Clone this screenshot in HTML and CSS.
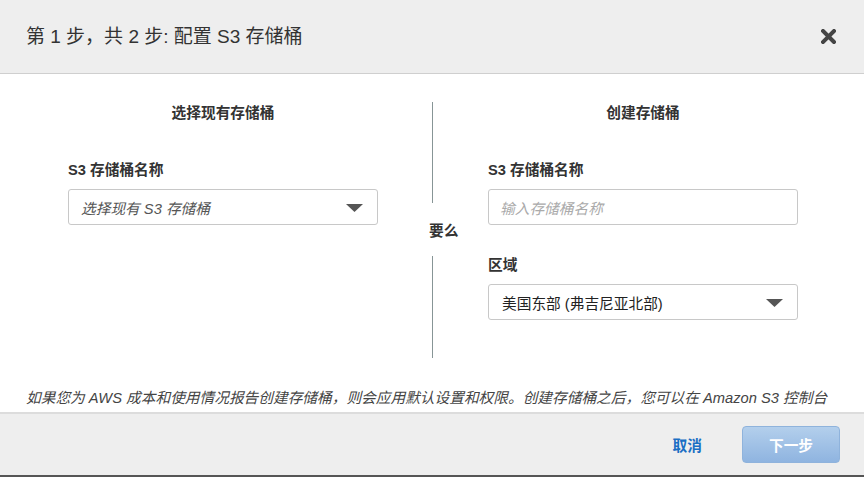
FILE: index.html
```html
<!DOCTYPE html>
<html lang="zh-CN">
<head>
<meta charset="utf-8">
<title>配置 S3 存储桶</title>
<link rel="stylesheet" href="styles.css">
</head>
<body>
<div class="modal">
  <header class="modal-header">
    <h1 class="title">第 1 步，共 2 步: 配置 S3 存储桶</h1>
    <button class="close" aria-label="关闭">
      <svg width="15" height="15" viewBox="0 0 15 15"><path d="M2 2 L13 13 M13 2 L2 13" stroke="#444" stroke-width="4" stroke-linecap="square" fill="none"/></svg>
    </button>
  </header>
  <div class="modal-body">
    <div class="columns">
      <section class="col">
        <h2 class="col-title">选择现有存储桶</h2>
        <label class="field-label">S3 存储桶名称</label>
        <div class="control select">
          <span class="ph-dark">选择现有 S3 存储桶</span>
          <svg class="caret" width="17" height="8" viewBox="0 0 17 8"><polygon points="0,0 17,0 8.5,8" fill="#555"/></svg>
        </div>
      </section>
      <div class="divider">
        <span class="line line-top"></span>
        <span class="or">要么</span>
        <span class="line line-bottom"></span>
      </div>
      <section class="col">
        <h2 class="col-title">创建存储桶</h2>
        <label class="field-label">S3 存储桶名称</label>
        <div class="control input"><span class="ph-light">输入存储桶名称</span></div>
        <label class="field-label second">区域</label>
        <div class="control select">
          <span class="value">美国东部 (弗吉尼亚北部)</span>
          <svg class="caret" width="17" height="8" viewBox="0 0 17 8"><polygon points="0,0 17,0 8.5,8" fill="#555"/></svg>
        </div>
      </section>
    </div>
    <p class="note">如果您为 AWS 成本和使用情况报告创建存储桶，则会应用默认设置和权限。创建存储桶之后，您可以在 Amazon S3 控制台</p>
  </div>
  <footer class="modal-footer">
    <a class="cancel" href="#">取消</a>
    <button class="primary">下一步</button>
  </footer>
</div>
</body>
</html>
```
FILE: styles.css
```css
html, body {
  margin: 0;
  padding: 0;
  height: 477px;
  overflow: hidden;
  background: #fff;
}
body {
  font-family: "Liberation Sans", "Noto Sans CJK SC", sans-serif;
  color: #333;
}
.modal {
  display: flex;
  flex-direction: column;
  height: 477px;
}
.modal-header {
  height: 73px;
  flex: none;
  background: #eeeeee;
  border-bottom: 1px solid #cfcfcf;
  display: flex;
  align-items: center;
  justify-content: space-between;
  padding: 0 28px 0 26px;
}
.title {
  margin: 0;
  font-size: 19px;
  font-weight: normal;
  color: #333;
  line-height: 26px;
}
.close {
  border: 0;
  background: none;
  padding: 0;
  width: 15px;
  height: 15px;
  display: flex;
}
.modal-body {
  height: 338px;
  flex: none;
  overflow: hidden;
  padding: 0 26px;
}
.columns {
  display: grid;
  grid-template-columns: 310px 110px 310px;
  padding-left: 42px;
  margin-top: 28px;
}
.col {
  display: flex;
  flex-direction: column;
}
.col-title {
  margin: 0;
  text-align: center;
  font-size: 14.7px;
  font-weight: bold;
  line-height: 22px;
  color: #333;
}
.field-label {
  display: block;
  margin-top: 36px;
  font-size: 14.7px;
  font-weight: bold;
  line-height: 20px;
  color: #333;
}
.field-label.second {
  margin-top: 30px;
}
.control {
  margin-top: 9px;
  height: 36px;
  box-sizing: border-box;
  border: 1px solid #c8c8c8;
  border-radius: 3px;
  background: #fff;
  display: flex;
  align-items: center;
  justify-content: space-between;
  padding: 0 14px 0 13px;
  font-size: 14.7px;
}
.ph-dark {
  font-style: italic;
  color: #555;
  margin-left: -1px;
}
.ph-light {
  font-style: italic;
  color: #aaa;
  margin-left: -2px;
}
.value {
  color: #222;
}
.caret {
  flex: none;
  margin-top: 1px;
}
.divider {
  display: flex;
  flex-direction: column;
  align-items: flex-start;
  padding-left: 51px;
}
.line {
  display: block;
  width: 1px;
  margin-left: 3px;
  background: #879596;
}
.line-top {
  height: 101px;
}
.line-bottom {
  height: 102px;
}
.or {
  height: 53px;
  display: flex;
  align-items: center;
  font-size: 14.7px;
  font-weight: bold;
  color: #333;
}
.note {
  margin: 29px 0 0 0;
  font-size: 14.7px;
  line-height: 22px;
  font-style: italic;
  color: #444;
  white-space: nowrap;
}
.modal-footer {
  flex: none;
  height: 61px;
  background: #eeeeee;
  border-top: 2px solid #dcdcdc;
  border-bottom: 2px solid #555;
  display: flex;
  align-items: center;
  justify-content: flex-end;
  gap: 40px;
  padding-right: 24px;
}
.cancel {
  color: #1a6fc4;
  font-weight: bold;
  font-size: 14.7px;
  text-decoration: none;
}
.primary {
  width: 98px;
  height: 37px;
  border: 1px solid #8fb3dc;
  border-radius: 4px;
  background: linear-gradient(#b3cfec, #8fb4e0);
  color: #fff;
  font-family: inherit;
  font-weight: bold;
  font-size: 14.7px;
  padding: 0;
}
```
